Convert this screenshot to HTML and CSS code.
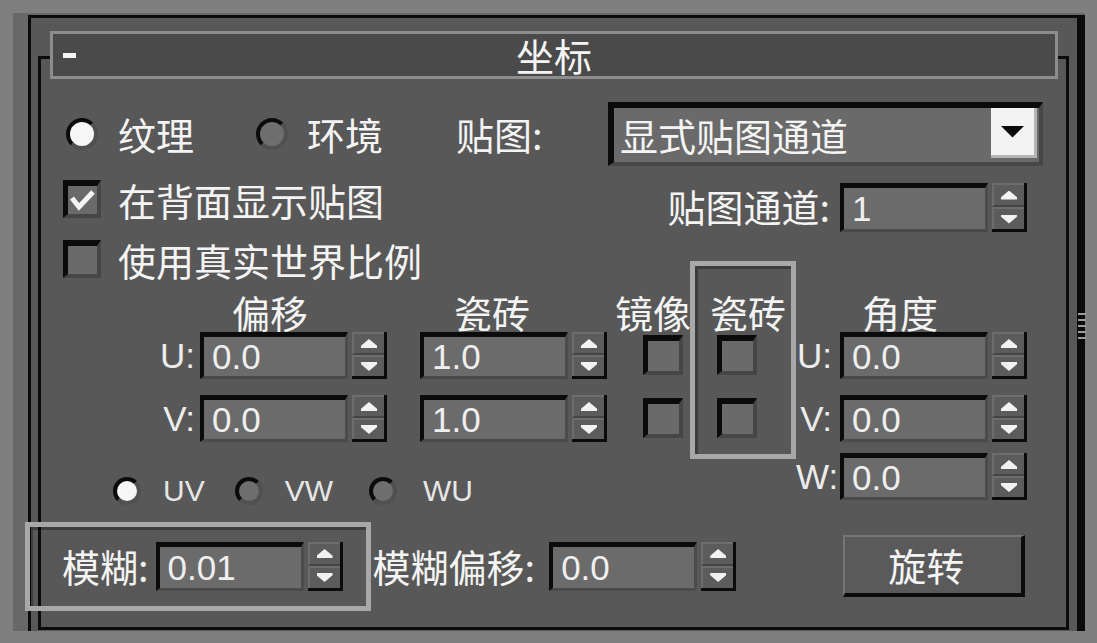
FILE: index.html
```html
<!DOCTYPE html>
<html>
	<head>
		<meta charset="utf-8">
		<title>坐标</title>
		<link rel="stylesheet" href="styles.css">
	</head>
	<body>
		<div class="rollout">
			<div class="panel">
				<div class="group">
					<div class="title"><span class="dash"></span><span>坐标</span><span></span></div>

					<div class="row row-source">
						<span class="radio on"></span><span class="label l-tex">纹理</span>
						<span class="radio"></span><span class="label l-env">环境</span>
						<span class="label l-map">贴图:</span>
						<div class="dropdown"><span class="label">显式贴图通道</span><span class="drop-btn"></span></div>
					</div>

					<div class="row row-back">
						<span class="check on"><svg width="29" height="28" viewBox="0 0 29 28"><polyline points="4,12 11,21 25,6" fill="none" stroke="#f4f4f4" stroke-width="5"/></svg></span>
						<span class="label l-check">在背面显示贴图</span>
						<span class="label l-channel">贴图通道:</span>
						<div class="spinner tall sp-channel"><div class="field">1</div><div class="spin"><span class="up"></span><span class="down"></span></div></div>
					</div>

					<div class="row row-real">
						<span class="check"></span>
						<span class="label l-check">使用真实世界比例</span>
					</div>

					<!-- 偏移 / 瓷砖 / 镜像 / 角度 -->
					<div class="coords">
						<span class="hd hd-offset">偏移</span>
						<span class="hd hd-tile">瓷砖</span>
						<span class="hd hd-mirror">镜像</span>
						<span class="hd hd-tilebox">瓷砖</span>
						<span class="hd hd-angle">角度</span>

						<span class="axis ax-l r-u">U:</span>
						<div class="spinner c-off r-u"><div class="field">0.0</div><div class="spin"><span class="up"></span><span class="down"></span></div></div>
						<div class="spinner c-tile r-u"><div class="field">1.0</div><div class="spin"><span class="up"></span><span class="down"></span></div></div>
						<span class="check ck-mirror r-u"></span>
						<span class="check ck-tile r-u"></span>
						<span class="axis ax-r r-u">U:</span>
						<div class="spinner c-ang r-u"><div class="field">0.0</div><div class="spin"><span class="up"></span><span class="down"></span></div></div>

						<span class="axis ax-l r-v">V:</span>
						<div class="spinner c-off r-v"><div class="field">0.0</div><div class="spin"><span class="up"></span><span class="down"></span></div></div>
						<div class="spinner c-tile r-v"><div class="field">1.0</div><div class="spin"><span class="up"></span><span class="down"></span></div></div>
						<span class="check ck-mirror r-v"></span>
						<span class="check ck-tile r-v"></span>
						<span class="axis ax-r r-v">V:</span>
						<div class="spinner c-ang r-v"><div class="field">0.0</div><div class="spin"><span class="up"></span><span class="down"></span></div></div>

						<div class="axes">
							<span class="radio sm on"></span><span class="ax-name n-uv">UV</span>
							<span class="radio sm r2"></span><span class="ax-name n-vw">VW</span>
							<span class="radio sm r3"></span><span class="ax-name n-wu">WU</span>
						</div>
						<span class="axis ax-r r-w">W:</span>
						<div class="spinner c-ang r-w"><div class="field">0.0</div><div class="spin"><span class="up"></span><span class="down"></span></div></div>
					</div>

					<div class="row row-blur">
						<span class="label">模糊:</span>
						<div class="spinner tall sp-blur"><div class="field">0.01</div><div class="spin"><span class="up"></span><span class="down"></span></div></div>
						<span class="label l-blur-off">模糊偏移:</span>
						<div class="spinner tall sp-blur-off"><div class="field">0.0</div><div class="spin"><span class="up"></span><span class="down"></span></div></div>
						<span class="btn">旋转</span>
					</div>
				</div>
			</div>

			<div class="mark mark-tile"></div>
			<div class="mark mark-blur"></div>
			<div class="grip"></div>
		</div>
	</body>
</html>
```

FILE: styles.css
```css
		*{
			margin: 0;
			padding: 0;
			box-sizing: border-box;
		}

		body{
			background: #7f7f7f;
			font-family: "Noto Sans CJK SC", sans-serif;
			color: #f4f4f4;
			overflow: hidden;
		}

/************************************ 外框 ************************************/
		.rollout{
			position: relative;
			width: 1072px;
			height: 618px;
			margin: 13px 0 0 13px;
			padding: 2px 0 0 15px;
			background: #686868;
		}

		.panel{
			height: 100%;
			display: flex;
			flex-direction: column;
			border-left: 3px solid #0b0b0b;
			border-top: 3px solid #0b0b0b;
			border-right: 8px solid #0b0b0b;
			background: #585858;
		}

		.group{
			flex: 1;
			margin: 38px 8px 1px 7px;
			border: 3px solid #0b0b0b;
		}

		.title{
			display: grid;
			grid-template-columns: 1fr auto 1fr;
			align-items: center;
			height: 48px;
			margin: -28px 8px 0 9px;
			border: 3px solid #8d8d8d;
			background: #4a4a4a;
			font-size: 38px;
			line-height: 42px;
		}

		.dash{
			width: 13px;
			height: 5px;
			margin-left: 10px;
			background: #f4f4f4;
		}

/************************************ 通用控件 ************************************/
		.row{
			display: flex;
			align-items: center;
		}

		.label{
			font-size: 38px;
			line-height: 40px;
			white-space: nowrap;
		}

		.radio{
			flex: none;
			width: 32px;
			height: 32px;
			border-radius: 50%;
			border: 4px solid;
			border-color: #0b0b0b #505050 #505050 #0b0b0b;
			background: #6e6e6e;
		}

		.radio.on{
			background: #f6f6f6;
		}

		.radio.sm{
			width: 28px;
			height: 28px;
		}

		.check{
			flex: none;
			width: 38px;
			height: 38px;
			border-style: solid;
			border-width: 6px 4px 4px 5px;
			border-color: #0b0b0b #464646 #464646 #0b0b0b;
			background: #6a6a6a;
		}

		.check svg{
			display: block;
		}

		.spinner{
			flex: none;
			display: flex;
			gap: 4px;
			width: 187px;
			height: 47px;
		}

		.field{
			flex: none;
			width: 148px;
			height: 100%;
			border-style: solid;
			border-width: 5px 3px 3px 4px;
			border-color: #0b0b0b #4c4c4c #4a4a4a #0b0b0b;
			background: #6b6b6b;
			padding-left: 8px;
			font: 35px "Liberation Sans", sans-serif;
			line-height: 39px;
			color: #efefef;
		}

		.spinner.tall{
			height: 49px;
		}

		.spinner.tall .field{
			line-height: 41px;
		}

		.spin{
			flex: none;
			width: 35px;
			display: flex;
			flex-direction: column;
			border-right: 3px solid #0b0b0b;
			border-bottom: 3px solid #0b0b0b;
			background: #5c5c5c;
		}

		.spin span{
			flex: 1;
			display: flex;
			align-items: center;
			justify-content: center;
			border-top: 2px solid #6d6d6d;
			border-left: 2px solid #6d6d6d;
		}

		.spin .up{
			border-bottom: 2px solid #444;
		}

		.spin span::before{
			content: "";
			width: 16px;
			height: 9px;
			background: #f2f2f2;
		}

		.spin .up::before{
			clip-path: polygon(50% 0, 100% 75%, 100% 100%, 0 100%, 0 75%);
		}

		.spin .down::before{
			clip-path: polygon(0 0, 100% 0, 100% 25%, 50% 100%, 0 25%);
		}

/************************************ 第一行: 纹理 / 环境 ************************************/
		.row-source{
			height: 64px;
			margin-top: 23px;
			padding: 0 23px 0 25px;
		}

		.l-tex{ margin-left: 20px; }
		.row-source .radio + .l-env{ margin-left: 19px; }
		.l-tex + .radio{ margin-left: 62px; }
		.l-map{ margin-left: 73px; }

		.dropdown{
			display: flex;
			align-items: center;
			width: 435px;
			height: 64px;
			margin-left: auto;
			padding-left: 6px;
			border-style: solid;
			border-width: 6px 4px 4px 6px;
			border-color: #0b0b0b #474747 #474747 #0b0b0b;
			background: #6a6a6a;
		}

		.drop-btn{
			display: flex;
			align-items: center;
			justify-content: center;
			align-self: flex-start;
			width: 46px;
			height: 50px;
			margin: 0 2px 0 auto;
			background: #f3f3f3;
			border-right: 3px solid #b5b5b5;
			border-bottom: 3px solid #b5b5b5;
		}

		.drop-btn::before{
			content: "";
			width: 24px;
			height: 12px;
			background: #0b0b0b;
			clip-path: polygon(0 0, 100% 0, 50% 100%);
		}

/************************************ 复选框 ************************************/
		.row-back{
			align-items: flex-start;
			height: 52px;
			margin-top: 14px;
			padding: 0 39px 0 22px;
		}

		.l-check{ margin-left: 17px; }

		.l-channel{
			margin-left: auto;
			line-height: 52px;
		}

		.sp-channel{
			margin: 3px 0 0 10px;
		}

		.row-real{
			align-items: flex-start;
			height: 40px;
			margin-top: 8px;
			padding-left: 22px;
		}

/************************************ 偏移 瓷砖 角度 ************************************/
		.coords{
			display: grid;
			grid-template-columns: 159px 188px 32px 186px 84px 106px 44px 187px;
			grid-template-rows: 40px 63px 58px 47px;
			margin-top: 12px;
		}

		.hd{
			grid-row: 1;
			font-size: 38px;
			line-height: 40px;
			white-space: nowrap;
		}

		.hd-offset{ grid-column: 2; padding-left: 32px; }
		.hd-tile{ grid-column: 4; padding-left: 34px; }
		.hd-mirror{ grid-column: 5; padding-left: 9px; }
		.hd-tilebox{ grid-column: 6; padding-left: 20px; }
		.hd-angle{ grid-column: 8; padding-left: 22px; }

		.r-u{ grid-row: 2; }
		.r-v{ grid-row: 3; }
		.r-w{ grid-row: 4; }

		.axis{
			font: 35px "Liberation Sans", sans-serif;
			line-height: 47px;
			text-align: right;
			color: #ececec;
		}

		.ax-l{ grid-column: 1; padding-right: 5px; }
		.ax-r{ grid-column: 7; padding-right: 8px; white-space: nowrap; }

		.c-off{ grid-column: 2; }
		.c-tile{ grid-column: 4; }
		.c-ang{ grid-column: 8; }

		.coords .check{
			width: 40px;
			height: 40px;
		}

		.ck-mirror{
			grid-column: 5;
			justify-self: end;
			margin: 3px 7px 0 0;
		}

		.ck-tile{
			grid-column: 6;
			justify-self: start;
			margin: 3px 0 0 27px;
		}

		.axes{
			grid-column: 1 / 7;
			grid-row: 4;
			align-self: end;
			display: flex;
			align-items: center;
			margin-bottom: -6px;
			padding-left: 72px;
			font: 30px "Liberation Sans", sans-serif;
			line-height: 30px;
			color: #e6e6e6;
		}

		.ax-name{ margin-left: 22px; }
		.axes .r2{ margin-left: 30px; }
		.axes .r3{ margin-left: 36px; }
		.n-wu{ margin-left: 26px; }

/************************************ 模糊 / 旋转 ************************************/
		.row-blur{
			height: 62px;
			margin-top: 35px;
			padding-left: 21px;
		}

		.sp-blur{ margin-left: 7px; }
		.l-blur-off{ margin-left: 30px; }
		.sp-blur-off{ margin-left: 14px; }

		.btn{
			width: 182px;
			height: 62px;
			margin-left: 107px;
			padding-right: 14px;
			border-style: solid;
			border-width: 2px 4px 4px 2px;
			border-color: #757575 #0b0b0b #0b0b0b #757575;
			background: #5a5a5a;
			font-size: 38px;
			line-height: 56px;
			text-align: center;
		}

/************************************ 标注框 ************************************/
		.mark{
			position: absolute;
			border: 5px solid #a8a8a8;
			box-shadow: inset 3px 3px 0 rgba(0, 0, 0, .3);
		}

		.mark-tile{
			left: 677px;
			top: 248px;
			width: 106px;
			height: 198px;
		}

		.mark-blur{
			left: 12px;
			top: 509px;
			width: 346px;
			height: 89px;
		}

		.grip{
			position: absolute;
			left: 1065px;
			top: 300px;
			width: 8px;
			height: 30px;
			background: repeating-linear-gradient(to bottom, #9c9c9c 0 2px, transparent 2px 6px);
		}
```
